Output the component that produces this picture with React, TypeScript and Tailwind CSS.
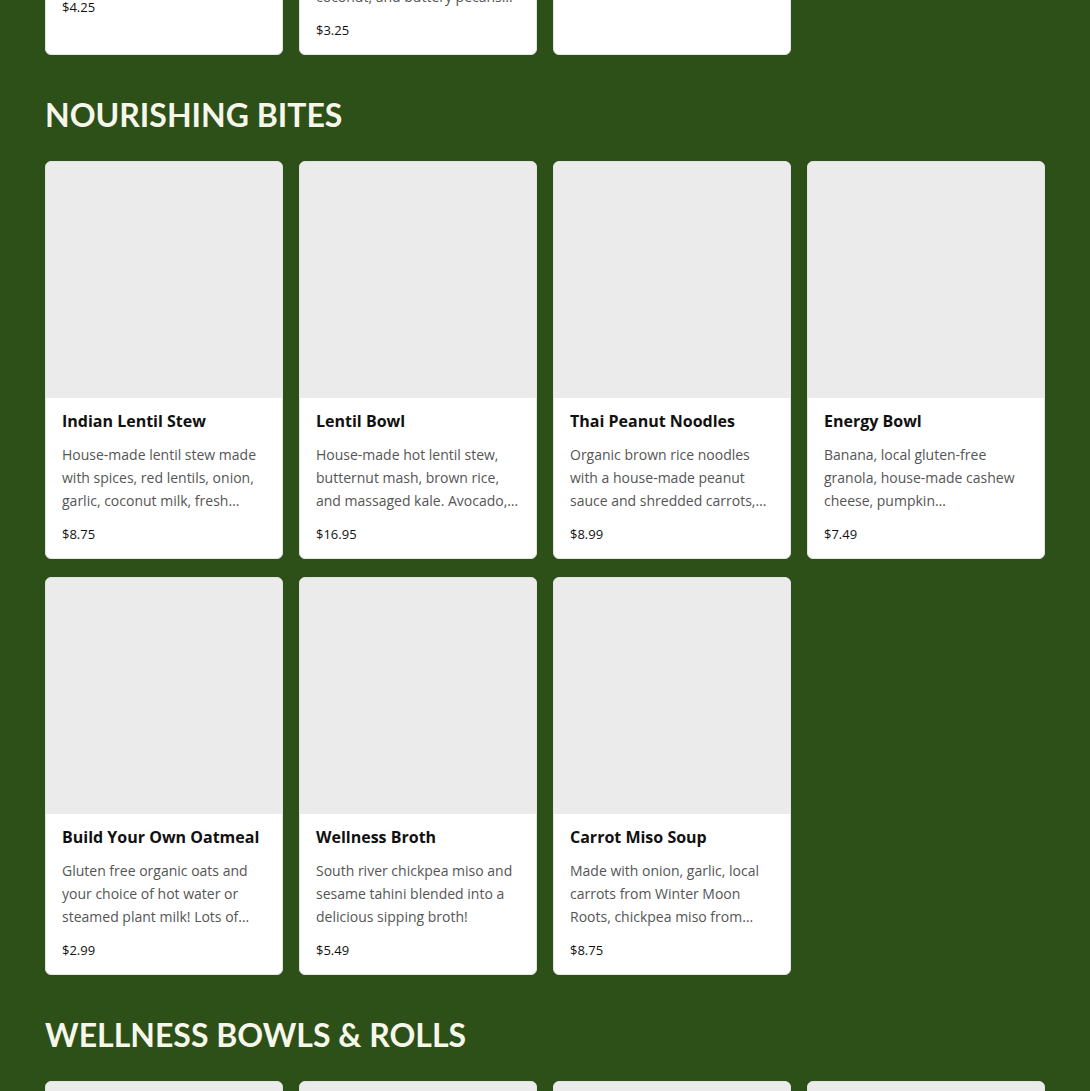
import React from "react";

type Item = { name: string; desc?: string; price: string };

const prevItems: Item[] = [
  { name: "Golden Milk", desc: "Turmeric, ginger and cinnamon with warm oat milk.", price: "$4.25" },
  { name: "Coconut Chia Pudding", desc: "Chia seeds soaked in oat milk with maple syrup, shredded coconut, and buttery pecans and fresh seasonal fruit.", price: "$3.25" },
  { name: "Seasonal Fruit Cup", price: "" },
];

const bites: Item[] = [
  { name: "Indian Lentil Stew", desc: "House-made lentil stew made with spices, red lentils, onion, garlic, coconut milk, fresh ginger and cilantro served warm.", price: "$8.75" },
  { name: "Lentil Bowl", desc: "House-made hot lentil stew, butternut mash, brown rice, and massaged kale. Avocado, tahini and pickled onion on top.", price: "$16.95" },
  { name: "Thai Peanut Noodles", desc: "Organic brown rice noodles with a house-made peanut sauce and shredded carrots, cabbage and cilantro.", price: "$8.99" },
  { name: "Energy Bowl", desc: "Banana, local gluten-free granola, house-made cashew cheese, pumpkin seeds,\u00A0cacao\u00A0nibs and honey.", price: "$7.49" },
  { name: "Build Your Own Oatmeal", desc: "Gluten free organic oats and your choice of hot water or steamed plant milk! Lots of toppings to choose from.", price: "$2.99" },
  { name: "Wellness Broth", desc: "South river chickpea miso and sesame tahini blended into a delicious sipping broth!", price: "$5.49" },
  { name: "Carrot Miso Soup", desc: "Made with onion, garlic, local carrots from Winter Moon Roots, chickpea miso from South River and fresh ginger.", price: "$8.75" },
];

const bowls: Item[] = [
  { name: "Buddha Bowl", price: "" },
  { name: "Rainbow Roll", price: "" },
  { name: "Harvest Bowl", price: "" },
  { name: "Summer Roll", price: "" },
];

function Card({ item }: { item: Item }) {
  return (
    <div className="flex h-[398px] flex-col overflow-hidden rounded-md border border-[#e3e3e3] bg-white">
      <div className="h-[236px] shrink-0 bg-[#ebebeb]" />
      <div className="flex flex-col px-4 pt-[11px] pb-[15px]">
        <h3 className="text-[16px] leading-6 font-bold text-[#111]">{item.name}</h3>
        {item.desc && (
          <p className="mt-[10px] line-clamp-3 text-[14px] leading-[23px] text-[#555]">{item.desc}</p>
        )}
        {item.price && <p className="mt-3 text-[13px] leading-5 text-[#111]">{item.price}</p>}
      </div>
    </div>
  );
}

function Heading({ children }: { children: React.ReactNode }) {
  return (
    <h2
      className="mt-10 mb-[26px] text-[32px] leading-10 font-bold text-[#f6f6ea]"
      style={{ fontFamily: 'Lato, "Open Sans", sans-serif' }}
    >
      {children}
    </h2>
  );
}

export default function App() {
  return (
    <div
      className="min-h-screen overflow-hidden bg-[#2d4f18] px-[45px]"
      style={{ fontFamily: '"Open Sans", "Liberation Sans", sans-serif' }}
    >
      {/* bottom of the previous section, scrolled past */}
      <div className="flex h-[55px] flex-col justify-end overflow-hidden">
        <div className="grid w-[1000px] shrink-0 grid-cols-4 gap-x-4">
          {prevItems.map((it) => (
            <Card key={it.name} item={it} />
          ))}
        </div>
      </div>

      <Heading>NOURISHING BITES</Heading>
      <div className="grid w-[1000px] grid-cols-4 gap-x-4 gap-y-[18px]">
        {bites.map((it) => (
          <Card key={it.name} item={it} />
        ))}
      </div>

      <Heading>WELLNESS BOWLS &amp; ROLLS</Heading>
      <div className="grid w-[1000px] grid-cols-4 gap-x-4 gap-y-[18px]">
        {bowls.map((it) => (
          <Card key={it.name} item={it} />
        ))}
      </div>
    </div>
  );
}
